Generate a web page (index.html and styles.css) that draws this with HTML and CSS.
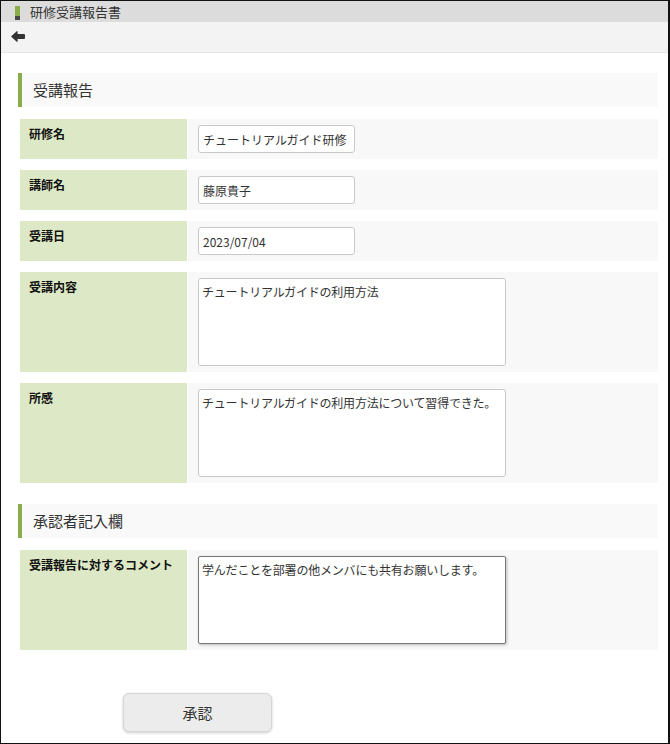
FILE: index.html
```html
<!DOCTYPE html>
<html lang="ja">

<head>
    <meta charset="UTF-8">
    <meta name="viewport" content="width=device-width, initial-scale=1.0">
    <title>研修受講報告書</title>
    <link rel="stylesheet" href="styles.css">
</head>

<body>
    <div class="window">
        <header class="titlebar">
            <span class="title-mark"></span>
            <span class="title">研修受講報告書</span>
        </header>
        <nav class="toolbar">
            <a href="#" class="back" aria-label="戻る">
                <svg width="14" height="11" viewBox="0 0 14 11">
                    <path d="M0 5.5 L6 0 L6.6 0.6 L6.6 3 L13 3 Q14 3 14 4 L14 7 Q14 8 13 8 L6.6 8 L6.6 10.4 L6 11 Z" fill="#333" />
                </svg>
            </a>
        </nav>

        <main class="content">
            <h2 class="section-title">受講報告</h2>

            <div class="row">
                <div class="label">研修名</div>
                <div class="value"><input class="field" type="text" value="チュートリアルガイド研修"></div>
            </div>
            <div class="row">
                <div class="label">講師名</div>
                <div class="value"><input class="field" type="text" value="藤原貴子"></div>
            </div>
            <div class="row">
                <div class="label">受講日</div>
                <div class="value"><input class="field" type="text" value="2023/07/04"></div>
            </div>
            <div class="row">
                <div class="label">受講内容</div>
                <div class="value"><textarea class="area">チュートリアルガイドの利用方法</textarea></div>
            </div>
            <div class="row">
                <div class="label">所感</div>
                <div class="value"><textarea class="area">チュートリアルガイドの利用方法について習得できた。</textarea></div>
            </div>

            <h2 class="section-title section-title--next">承認者記入欄</h2>

            <div class="row">
                <div class="label">受講報告に対するコメント</div>
                <div class="value"><textarea class="area area--edit">学んだことを部署の他メンバにも共有お願いします。</textarea></div>
            </div>
        </main>

        <footer class="actions">
            <button class="btn" type="button">承認</button>
        </footer>
    </div>
</body>

</html>
```

FILE: styles.css
```css
html {
    box-sizing: border-box;
    font-family: "Noto Sans CJK JP", "Noto Sans", sans-serif;
    font-size: 12px;
    color: #333;
}

*,
*:before,
*:after {
    box-sizing: inherit;
}

body {
    margin: 0;
    background: #fff;
}

.window {
    height: 744px;
    border: 1px solid #111;
    border-right-width: 2px;
    overflow: hidden;
}

/* title bar */
.titlebar {
    height: 21px;
    background-color: #dcdcdc;
    display: flex;
    align-items: center;
    padding-left: 14px;
}

.title-mark {
    width: 5px;
    height: 14px;
    margin-top: 3px;
    background: linear-gradient(#8aae4a 0, #8aae4a 10px, #4a4a4a 10px);
}

.title {
    margin-left: 10px;
    font-size: 13px;
    line-height: 21px;
    color: #333;
}

/* toolbar */
.toolbar {
    height: 31px;
    background-color: #f3f3f3;
    border-bottom: 1px solid #e6e6e6;
    display: flex;
    align-items: center;
    padding-left: 10px;
}

.back {
    display: flex;
    margin-bottom: 2px;
}

/* content */
.content {
    padding: 20px 10px 0 17px;
}

.section-title {
    margin: 0 0 12px;
    height: 34px;
    background-color: #f9f9f9;
    border-left: 4px solid #89ad48;
    padding-left: 11px;
    font-size: 15px;
    font-weight: normal;
    line-height: 34px;
    color: #333;
}

.section-title--next {
    margin-top: 21px;
}

.row {
    display: flex;
    gap: 1px;
    margin: 0 0 11px 2px;
}

.label {
    width: 167px;
    flex-shrink: 0;
    background-color: #dde9c6;
    padding: 6px 9px;
    font-weight: bold;
    line-height: 18px;
    color: #111;
}

.value {
    flex-grow: 1;
    background-color: #f8f8f8;
    padding: 6px 10px;
}

.field {
    display: block;
    width: 157px;
    height: 28px;
    border: 1px solid #c8c8c8;
    border-radius: 3px;
    background: #fff;
    padding: 0 4px;
    font-family: inherit;
    font-size: 12px;
    color: #333;
}

.area {
    display: block;
    width: 308px;
    height: 88px;
    border: 1px solid #c8c8c8;
    border-radius: 3px;
    background: #fff;
    padding: 4px 3px;
    font-family: inherit;
    font-size: 12px;
    line-height: 18px;
    letter-spacing: -0.2px;
    color: #333;
    resize: none;
}

.area--edit {
    border-color: #777;
    border-radius: 2px;
    box-shadow: 1px 1px 3px rgba(0, 0, 0, .25);
}

/* actions */
.actions {
    padding: 32px 0 0 122px;
}

.btn {
    width: 149px;
    height: 39px;
    background-color: #ececec;
    border: 1px solid #d6d6d6;
    border-radius: 6px;
    box-shadow: 0 1px 3px rgba(0, 0, 0, .2);
    font-family: inherit;
    font-size: 15px;
    color: #333;
}
```
